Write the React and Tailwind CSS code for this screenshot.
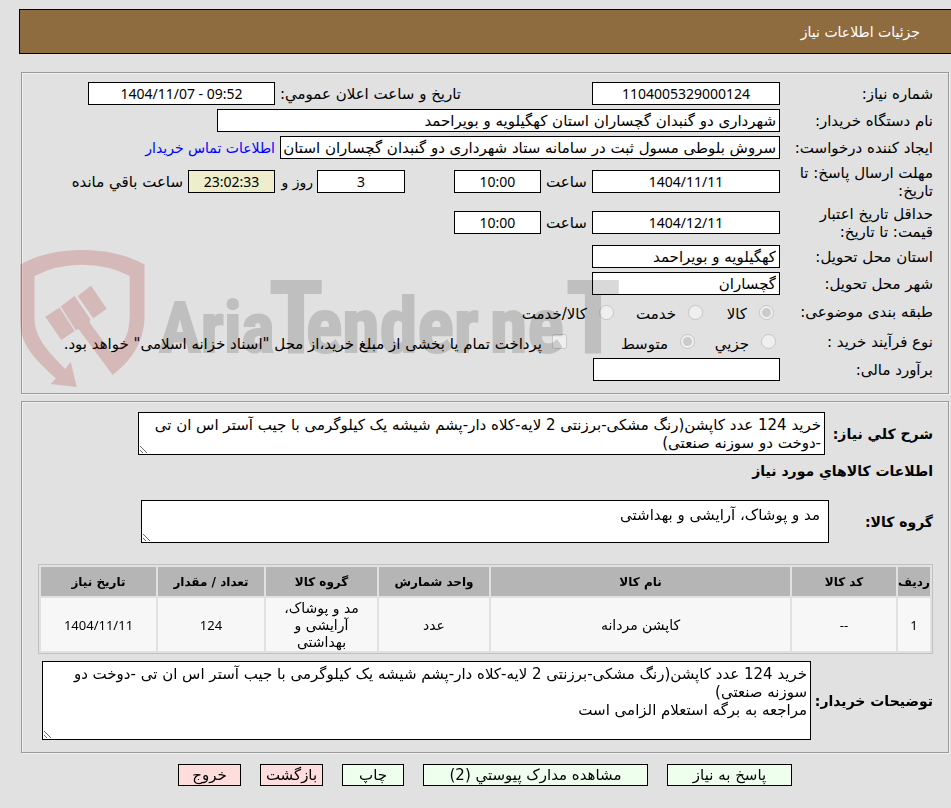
const field = "border border-black bg-white text-black px-[3px] h-[23px]";
const number = "text-center text-sm font-['Noto_Sans','DejaVu_Sans',sans-serif]";
const area = "block resize border border-black bg-white text-black px-[3px] py-[3px] leading-[18px]";

function Row({ label, id, children, tall }) {
  return (
    <div className={tall ? "flex min-h-[41px] items-center" : "flex min-h-[27px] items-center"}>
      <label htmlFor={id} className="w-[153px] shrink-0 pl-2 leading-[18px]">
        {label}
      </label>
      {children}
    </div>
  );
}

function Panel({ children, className }) {
  return (
    <section
      className={
        "mr-[2px] ml-[21px] border border-[#9a9a9a] shadow-[inset_1px_1px_0_#f0f0f0,1px_1px_0_#f0f0f0] " + className
      }
    >
      {children}
    </section>
  );
}

function Watermark() {
  return (
    <svg
      className="pointer-events-none absolute top-[245px] left-[20px] h-[147px] w-[605px]"
      viewBox="20 245 605 147"
      aria-hidden="true"
    >
      <g fill="#a51414" fillOpacity="0.2">
        <path d="M20.300 264.500Q46 250 82.500 250Q118 250 144.500 264.500V315C144.500 340 134 358 112.700 375L78.500 329L75.700 330L60.700 306.500L74.500 296L90.300 319L89.500 322.500L112.500 354C125 344 129.700 332 129.700 315V276Q108 264.700 82.500 264.700Q56 264.700 34.500 276V318C34.500 336 46 350 65.300 369L70.700 361.700L76.700 387L50.700 384L56 378.500C32 357 20.300 343 20.300 322Z" />
        <path d="M45.300 316.700L59.500 307.500L74.700 331L61.300 340Z" />
        <path d="M77.700 296L91 285.700L106.700 308.700L93.300 318.300Z" />
      </g>
      <g opacity="0.147">
        <text
          direction="ltr"
          fontFamily="'Liberation Sans Narrow', 'Roboto Condensed', 'DejaVu Sans Condensed', sans-serif"
          fontWeight="700"
          fontSize="76"
          y="352"
          fill="#000"
          stroke="#000"
          strokeWidth="2"
        >
          <tspan x="159" fontSize="70">Aria</tspan>
          <tspan x="269" fontSize="100">T</tspan>
          <tspan x="306">ender</tspan>
          <tspan x="490">ne</tspan>
          <tspan x="566" fontSize="100">T</tspan>
        </text>
      </g>
    </svg>
  );
}

const columns = [
  ["ردیف", "w-[32px]", "1"],
  ["کد کالا", "w-[104px]", "--"],
  ["نام کالا", "", "کاپشن مردانه"],
  ["واحد شمارش", "w-[110px]", "عدد"],
  ["گروه کالا", "w-[111px]", "مد و پوشاک، آرایشی و بهداشتی"],
  ["تعداد / مقدار", "w-[106px]", "124"],
  ["تاریخ نیاز", "w-[115px]", "1404/11/11"],
];

export default function App() {
  return (
    <main
      dir="rtl"
      lang="fa"
      className="relative min-h-screen bg-[#e1e1e1] pt-[9px] pb-[22px] font-['DejaVu_Sans',sans-serif] text-[15px] leading-[20px] text-black"
    >
      <header className="ml-[19px] flex h-[45px] items-center border-y border-l border-black bg-[#8f6c3f] pr-[31px] text-white">
        <h1 className="text-sm">جزئیات اطلاعات نیاز</h1>
      </header>

      <Panel className="mt-[18px] pt-[7px] pr-[15px] pb-[10px]">
        <Row label="شماره نیاز:" id="need">
          <input id="need" readOnly className={field + " w-[188px] " + number} defaultValue="1104005329000124" />
          <label htmlFor="announce" className="mr-[131px] w-[186px] whitespace-nowrap">
            تاریخ و ساعت اعلان عمومي:
          </label>
          <input id="announce" readOnly dir="ltr" className={field + " w-[187px] " + number} defaultValue="1404/11/07 - 09:52" />
        </Row>
        <Row label="نام دستگاه خریدار:" id="org">
          <input id="org" readOnly className={field + " w-[563px]"} defaultValue="شهرداری دو گنبدان گچساران استان کهگیلویه و بویراحمد" />
        </Row>
        <Row label="ایجاد کننده درخواست:" id="creator">
          <input id="creator" readOnly className={field + " w-[500px]"} defaultValue="سروش بلوطی مسول ثبت در سامانه ستاد شهرداری دو گنبدان گچساران استان کهگیلویه و بویراحمد" />
          <a href="#contact" className="mr-[5px] text-sm text-[#0000ff]">
            اطلاعات تماس خریدار
          </a>
        </Row>
        <Row label="مهلت ارسال پاسخ: تا تاریخ:" id="deadline" tall>
          <input id="deadline" readOnly className={field + " w-[188px] " + number} defaultValue="1404/11/11" />
          <label htmlFor="deadline-time" className="w-[51px] text-center">ساعت</label>
          <input id="deadline-time" readOnly className={field + " w-[87px] " + number} defaultValue="10:00" />
          <input aria-label="روز" readOnly className={field + " mr-[49px] w-[88px] " + number} defaultValue="3" />
          <span className="w-[42px] pr-[4px] text-sm whitespace-nowrap">روز و</span>
          <input id="left" readOnly className={"h-[23px] w-[87px] border border-black bg-[#eeeecc] " + number} defaultValue="23:02:33" />
          <label htmlFor="left" className="mr-[5px]">ساعت باقي مانده</label>
        </Row>
        <Row label="حداقل تاریخ اعتبار قیمت: تا تاریخ:" id="valid" tall>
          <input id="valid" readOnly className={field + " w-[188px] " + number} defaultValue="1404/12/11" />
          <label htmlFor="valid-time" className="w-[51px] text-center">ساعت</label>
          <input id="valid-time" readOnly className={field + " w-[87px] " + number} defaultValue="10:00" />
        </Row>
        <Row label="استان محل تحویل:" id="province">
          <input id="province" readOnly className={field + " w-[188px]"} defaultValue="کهگیلویه و بویراحمد" />
        </Row>
        <Row label="شهر محل تحویل:" id="city">
          <input id="city" readOnly className={field + " w-[188px]"} defaultValue="گچساران" />
        </Row>
        <div role="radiogroup" aria-label="طبقه بندی موضوعی" className="flex h-[30px] items-center">
          <span className="w-[159px]">طبقه بندی موضوعی:</span>
          <input type="radio" id="c1" name="category" disabled defaultChecked className="size-[15px]" />
          <label htmlFor="c1" className="w-[56px] pt-1 pr-[12px]">کالا</label>
          <input type="radio" id="c2" name="category" disabled className="size-[15px]" />
          <label htmlFor="c2" className="w-[74px] pt-1 pr-[12px]">خدمت</label>
          <input type="radio" id="c3" name="category" disabled className="size-[15px]" />
          <label htmlFor="c3" className="pt-1 pr-[12px]">کالا/خدمت</label>
        </div>
        <div role="radiogroup" aria-label="نوع فرآیند خرید" className="flex h-[29px] items-center">
          <span className="w-[157px]">نوع فرآیند خرید :</span>
          <input type="radio" id="p1" name="process" disabled className="size-[15px]" />
          <label htmlFor="p1" className="w-[66px] pt-1 pr-[12px]">جزيي</label>
          <input type="radio" id="p2" name="process" disabled defaultChecked className="size-[15px]" />
          <label htmlFor="p2" className="w-[113px] pt-1 pr-[12px]">متوسط</label>
          <input type="checkbox" id="treasury" disabled className="size-[15px]" />
          <label htmlFor="treasury" className="pt-1 pr-[10px] whitespace-nowrap">
            پرداخت تمام یا بخشی از مبلغ خرید،از محل "اسناد خزانه اسلامی" خواهد بود.
          </label>
        </div>
        <Row label="برآورد مالی:" id="estimate">
          <input id="estimate" readOnly className={field + " w-[187px]"} />
        </Row>
      </Panel>

      <Panel className="mt-[7px] pt-[10px] pr-[15px] pb-[12px]">
        <div className="flex items-center">
          <label htmlFor="summary" className="w-[108px] shrink-0 text-sm font-bold">شرح کلي نیاز:</label>
          <textarea
            id="summary"
            readOnly
            className={area + " ml-[116px] h-[43px] flex-1"}
            defaultValue="خرید 124 عدد کاپشن(رنگ مشکی-برزنتی 2 لایه-کلاه دار-پشم شیشه یک کیلوگرمی با جیب آستر اس ان تی -دوخت دو سوزنه صنعتی)"
          />
        </div>
        <h2 className="mt-1 text-sm leading-6 font-bold">اطلاعات کالاهاي مورد نیاز</h2>
        <div className="mt-[17px] flex items-center">
          <label htmlFor="group" className="w-[104px] shrink-0 text-sm font-bold">گروه کالا:</label>
          <textarea
            id="group"
            readOnly
            className="ml-[119px] block h-[43px] flex-1 resize border border-black bg-white px-[8px] py-[5px] leading-[18px]"
            defaultValue="مد و پوشاک، آرایشی و بهداشتی"
          />
        </div>
        <div className="mt-[21px] ml-[16px] border border-[#c0c0c0]">
          <table className="w-full table-fixed border-separate border-spacing-[2px] text-center leading-[17px]">
            <thead>
              <tr>
                {columns.map(([name, width]) => (
                  <th key={name} className={"h-[29px] bg-[#b5b5b5] text-xs font-bold whitespace-nowrap " + width}>
                    {name}
                  </th>
                ))}
              </tr>
            </thead>
            <tbody>
              <tr>
                {columns.map(([name, , value]) => (
                  <td
                    key={name}
                    className={
                      /^[\d/-]+$/.test(value)
                        ? "h-[53px] bg-[#f7f7f7] px-2 pt-[2px] font-['Noto_Sans',sans-serif] text-[13px]"
                        : "h-[53px] bg-[#f7f7f7] px-2 pt-[2px] text-sm leading-[17px]"
                    }
                  >
                    {value}
                  </td>
                ))}
              </tr>
            </tbody>
          </table>
        </div>
        <div className="mt-[7px] flex items-center">
          <label htmlFor="notes" className="w-[122px] shrink-0 text-sm font-bold">توضیحات خریدار:</label>
          <textarea
            id="notes"
            readOnly
            className={area + " ml-[20px] h-[79px] flex-1"}
            defaultValue={
              "خرید 124 عدد کاپشن(رنگ مشکی-برزنتی 2 لایه-کلاه دار-پشم شیشه یک کیلوگرمی با جیب آستر اس ان تی -دوخت دو سوزنه صنعتی)\nمراجعه به برگه استعلام الزامی است"
            }
          />
        </div>
      </Panel>

      <div className="mt-[11px] mr-[2px] ml-[21px] flex justify-center gap-[19px]">
        <button className="h-[22px] w-[125px] border border-black bg-[#eeffee] leading-5">پاسخ به نیاز</button>
        <button className="h-[22px] w-[225px] border border-black bg-[#eeffee] leading-5">مشاهده مدارک پیوستي (2)</button>
        <button className="h-[22px] w-[62px] border border-black bg-[#eeffee] leading-5">چاپ</button>
        <button className="h-[22px] w-[63px] border border-black bg-[#ffdddd] leading-5">بازگشت</button>
        <button className="h-[22px] w-[63px] border border-black bg-[#ffdddd] leading-5">خروج</button>
      </div>

      <Watermark />
    </main>
  );
}
